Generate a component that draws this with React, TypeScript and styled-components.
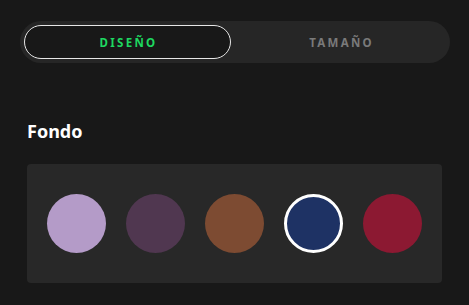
import React, { useState } from "react";
import styled, { createGlobalStyle } from "styled-components";

const GlobalStyle = createGlobalStyle`
  html, body {
    margin: 0;
    padding: 0;
    background: #181818;
  }
  body {
    font-family: "Noto Sans", "Liberation Sans", sans-serif;
    color: #fff;
  }
`;

const Page = styled.div`
  width: 469px;
  height: 305px;
  box-sizing: border-box;
  padding: 21px 19px 0 20px;
  background: #181818;
`;

const Tabs = styled.div`
  display: grid;
  grid-template-columns: 1fr 1fr;
  width: 430px;
  height: 42px;
  box-sizing: border-box;
  padding: 4px;
  border-radius: 21px;
  background: #262626;
`;

const Tab = styled.button<{ $active?: boolean }>`
  display: flex;
  align-items: center;
  justify-content: center;
  height: 34px;
  margin-right: ${({ $active }) => ($active ? "4px" : "0")};
  padding: 0 0 0 2px;
  border-radius: 17px;
  border: 1px solid ${({ $active }) => ($active ? "#e6e6e6" : "transparent")};
  background: ${({ $active }) => ($active ? "#181818" : "transparent")};
  color: ${({ $active }) => ($active ? "#1ed760" : "#7a7a7a")};
  font-family: "Noto Sans", "Liberation Sans", sans-serif;
  font-size: 11.5px;
  font-weight: 700;
  letter-spacing: 2.3px;
  cursor: pointer;
`;

const Section = styled.section`
  padding: 55px 7px 0 7px;
`;

const Title = styled.h2`
  margin: 0 0 20px;
  font-family: "Noto Sans", "Liberation Sans", sans-serif;
  font-size: 18px;
  font-weight: 700;
  line-height: 26px;
  color: #fff;
`;

const Panel = styled.div`
  display: flex;
  gap: 20px;
  width: 415px;
  height: 119px;
  box-sizing: border-box;
  padding: 30px 20px;
  border-radius: 4px;
  background: #282828;
`;

const Swatch = styled.button<{ $color: string; $selected?: boolean }>`
  width: 59px;
  height: 59px;
  padding: 0;
  border-radius: 50%;
  border: ${({ $selected }) => ($selected ? "3px solid #fff" : "none")};
  background: ${({ $color }) => $color};
  cursor: pointer;
`;

const colors = ["#b49bc8", "#503750", "#7d4b32", "#1e3264", "#8c1932"];

export default function App() {
  const [tab, setTab] = useState(0);
  const [selected, setSelected] = useState(3);

  return (
    <Page>
      <GlobalStyle />
      <Tabs>
        <Tab $active={tab === 0} onClick={() => setTab(0)}>
          DISEÑO
        </Tab>
        <Tab $active={tab === 1} onClick={() => setTab(1)}>
          TAMAÑO
        </Tab>
      </Tabs>
      <Section>
        <Title>Fondo</Title>
        <Panel>
          {colors.map((c, i) => (
            <Swatch
              key={c}
              $color={c}
              $selected={selected === i}
              onClick={() => setSelected(i)}
            />
          ))}
        </Panel>
      </Section>
    </Page>
  );
}
